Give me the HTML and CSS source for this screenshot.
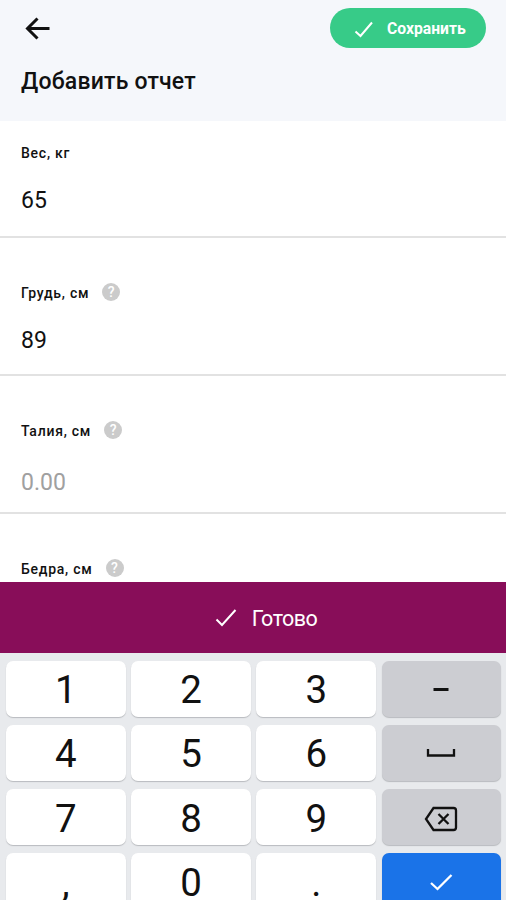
FILE: index.html
```
<!DOCTYPE html>
<html lang="ru">
<head>
    <meta charset="UTF-8">
    <meta name="viewport" content="width=device-width, initial-scale=1.0">
    <title>Добавить отчет</title>
    <link rel="stylesheet" href="styles.css">
</head>
<body>
    <div class="screen">
        <header class="header">
            <div class="toolbar">
                <a href="#" class="back" aria-label="Назад">
                    <svg width="26" height="24" viewBox="0 0 26 24">
                        <path d="M24.500 12.500H3M12.500 2.500l-10 10 10 10"/>
                    </svg>
                </a>
                <button class="save-btn">
                    <svg width="20" height="18" viewBox="0 0 20 18">
                        <path d="M1.500 11.500l5 4.500L18 2.500"/>
                    </svg>
                    <span>Сохранить</span>
                </button>
            </div>
            <h1>Добавить отчет</h1>
        </header>

        <main class="form">
            <div class="field first">
                <div class="label"><span>Вес, кг</span></div>
                <div class="value">65</div>
            </div>
            <div class="field">
                <div class="label"><span>Грудь, см</span><span class="help">?</span></div>
                <div class="value">89</div>
            </div>
            <div class="field">
                <div class="label"><span>Талия, см</span><span class="help">?</span></div>
                <div class="value empty">0.00</div>
            </div>
            <div class="field">
                <div class="label"><span>Бедра, см</span><span class="help">?</span></div>
            </div>
        </main>

        <button class="done-btn">
            <svg width="22" height="20" viewBox="0 0 22 20">
                <path d="M1.500 11.500l5.500 5.500L20.500 2"/>
            </svg>
            <span>Готово</span>
        </button>

        <div class="keyboard">
            <button class="key">1</button>
            <button class="key">2</button>
            <button class="key">3</button>
            <button class="key special" aria-label="Минус">
                <svg width="32" height="26" viewBox="0 0 32 26">
                    <path class="thick" d="M8.500 12.500h15"/>
                </svg>
            </button>

            <button class="key">4</button>
            <button class="key">5</button>
            <button class="key">6</button>
            <button class="key special" aria-label="Пробел">
                <svg width="32" height="26" viewBox="0 0 32 26">
                    <path d="M3 8v6.500h26V8"/>
                </svg>
            </button>

            <button class="key">7</button>
            <button class="key">8</button>
            <button class="key">9</button>
            <button class="key special" aria-label="Удалить">
                <svg width="34" height="26" viewBox="0 0 34 26">
                    <path d="M9.500 2H29.500q2.500 0 2.500 2.500v17q0 2.500-2.500 2.500H9.500L2 13zM14.500 8l10 10M24.500 8l-10 10"/>
                </svg>
            </button>

            <button class="key">,</button>
            <button class="key">0</button>
            <button class="key">.</button>
            <button class="key enter" aria-label="Ввод">
                <svg width="24" height="20" viewBox="0 0 24 20">
                    <path d="M2 10l6.500 6L22.500 2"/>
                </svg>
            </button>
        </div>
    </div>
</body>
</html>
```
FILE: styles.css
```
* {
    margin: 0;
    padding: 0;
    box-sizing: border-box;
}

body {
    font-family: Roboto, "Liberation Sans", sans-serif;
    background: #fff;
    color: #111;
}

button {
    border: none;
    font-family: inherit;
    cursor: pointer;
}

svg {
    display: block;
    fill: none;
    stroke: currentColor;
    stroke-width: 2;
}

.screen {
    display: flex;
    flex-direction: column;
    height: 900px;
    overflow: hidden;
}

/* Header */
.header {
    height: 121px;
    flex-shrink: 0;
    padding: 8px 20px 0 21px;
    background: #f5f7fb;
}

.toolbar {
    display: flex;
    justify-content: space-between;
    align-items: center;
    height: 40px;
}

.back {
    margin-left: 4px;
    color: #111;
}

.back svg {
    stroke-width: 3;
}

.save-btn {
    display: flex;
    align-items: center;
    gap: 13px;
    width: 156px;
    height: 40px;
    padding: 1px 0 0 24px;
    border-radius: 20px;
    background: #37cb88;
    color: #fff;
    font-size: 15.700px;
    font-weight: 700;
}

.header h1 {
    margin-top: 20px;
    font-size: 23px;
    line-height: 28px;
    font-weight: 500;
    letter-spacing: 0.200px;
}

/* Form */
.form {
    height: 461px;
    flex-shrink: 0;
    overflow: hidden;
}

.field {
    height: 138px;
    padding: 44px 21px 0;
    border-bottom: 2px solid #e2e2e2;
}

.field.first {
    height: 117px;
    padding-top: 21px;
}

.label {
    display: flex;
    align-items: center;
    gap: 13px;
    height: 22px;
    font-size: 14px;
    font-weight: 500;
    letter-spacing: 0.750px;
}

.help {
    width: 18px;
    height: 18px;
    margin-top: -2px;
    border-radius: 50%;
    background: #cbcbcb;
    color: #fff;
    font-size: 14px;
    line-height: 18px;
    letter-spacing: 0;
    text-align: center;
}

.value {
    margin-top: 22px;
    font-size: 23px;
    line-height: 30px;
}

.value.empty {
    margin-top: 26px;
    color: #a0a0a0;
}

/* Done bar */
.done-btn {
    display: flex;
    align-items: center;
    justify-content: center;
    gap: 15px;
    height: 71px;
    flex-shrink: 0;
    padding: 1px 0 0 26px;
    background: #880d59;
    color: #fff;
    font-size: 21.500px;
    letter-spacing: -0.500px;
}

/* Keyboard */
.keyboard {
    display: grid;
    grid-template-columns: repeat(4, 1fr);
    grid-auto-rows: 56px;
    gap: 8.300px 5.700px;
    flex: 1;
    padding: 7.500px 4.800px 0 6px;
    background: #e8eaed;
}

.key {
    display: flex;
    align-items: center;
    justify-content: center;
    padding-top: 3px;
    border-radius: 7px;
    background: #fff;
    box-shadow: 0 1px 1px #b9bbbf;
    color: #111;
    font-size: 38.500px;
    line-height: 46px;
}

.key.special {
    background: #cccdd2;
}

.key .thick {
    stroke-width: 3;
}

.key.enter {
    background: #1a73e8;
    color: #fff;
}

.key svg {
    stroke-width: 2.300px;
}
```
